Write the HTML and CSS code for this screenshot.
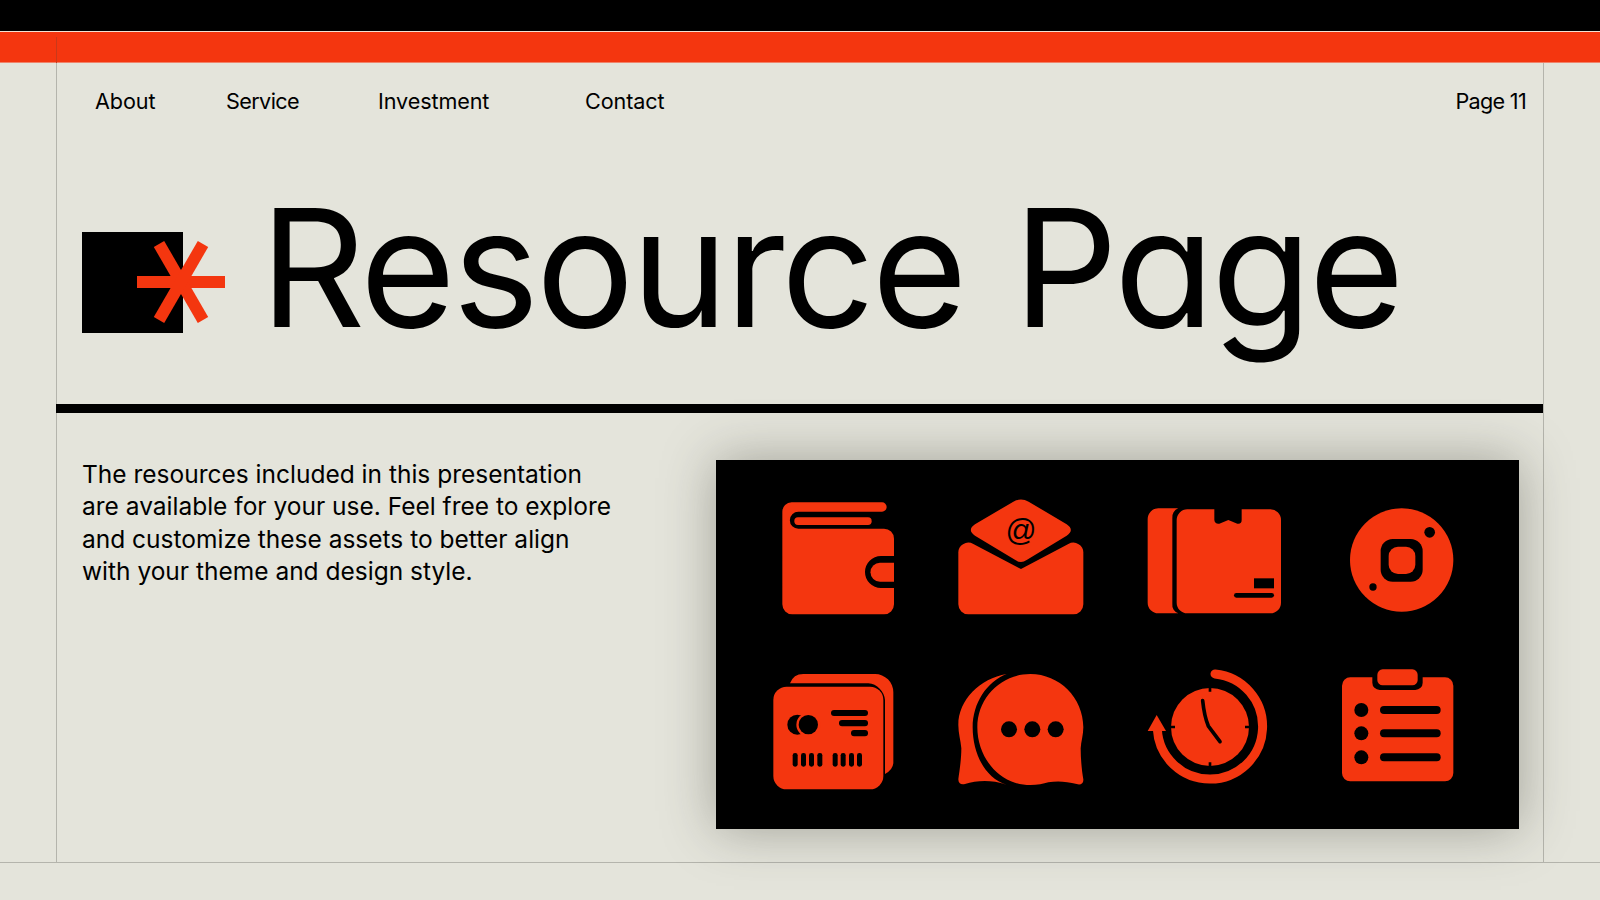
FILE: index.html
```html
<!DOCTYPE html>
<html lang="en">

<head>
    <meta charset="UTF-8">
    <meta name="viewport" content="width=device-width, initial-scale=1.0">
    <title>Resource Page</title>
    <link rel="stylesheet" href="styles.css">
</head>

<body>
    <div class="top-black"></div>
    <div class="top-orange"></div>

    <main class="frame">
        <nav class="nav">
            <a>About</a>
            <a class="nav-tight">Service</a>
            <a>Investment</a>
            <a>Contact</a>
            <span class="page-no">Page 11</span>
        </nav>

        <header class="hero">
            <svg class="mark" width="143" height="101" viewBox="0 0 143 101">
                <rect width="101" height="101" fill="#000" />
                <g stroke="#f4360f" stroke-width="12">
                    <path d="M55 50H143" />
                    <path d="M77 12L121 88" />
                    <path d="M121 12L77 88" />
                </g>
            </svg>
            <h1>Resource Page</h1>
        </header>

        <section class="content">
            <p class="intro">The resources included in this presentation<br>are available for your use. Feel free to explore<br>and customize these assets to better align<br>with your theme and design style.</p>

            <div class="panel">
                <!-- wallet -->
                <svg class="icon" viewBox="0 0 570 510">
                    <path class="fg" d="M155 97H426a14 14 0 0 1 0 28H175a25.500 25.500 0 0 0 0 51H432a30 30 0 0 1 30 30V258H423a48 48 0 0 0 0 96H462V403a30 30 0 0 1-30 30H157a30 30 0 0 1-30-30V125a28 28 0 0 1 28-28Z" />
                    <rect class="fg" x="163" y="142" width="232" height="23" rx="11" />
                    <path class="fg" d="M462 278H420a28.500 28.500 0 0 0 0 57H462Z" />
                </svg>
                <!-- open mail -->
                <svg class="icon" viewBox="190 0 570 510">
                    <path class="fg" d="M275 250a30 30 0 0 1 45-28L463 297L605 222a30 30 0 0 1 45 28V403a30 30 0 0 1-30 30H305a30 30 0 0 1-30-30Z" />
                    <path class="fg" d="M440 95Q463 82 486 95L600 163Q625 180 600 197L480 270Q463 282 446 270L325 197Q300 180 325 163Z" />
                    <text class="at" x="463" y="213" text-anchor="middle">@</text>
                </svg>
                <!-- parcel -->
                <svg class="icon" viewBox="0 0 570 510">
                    <path class="fg" d="M175 115H115a32 32 0 0 0-32 32V398a32 32 0 0 0 32 32H175a26 26 0 0 1-18-28V145a28 28 0 0 1 18-30Z" />
                    <path class="fg" d="M202 118H283V150Q285 163 298 161L325 150L352 161Q365 163 365 150V118H450a32 32 0 0 1 33 32V398a32 32 0 0 1-32 32H202a32 32 0 0 1-32-32V150a32 32 0 0 1 32-32Z" />
                    <rect class="bg" x="402" y="325" width="60" height="30" />
                    <rect class="bg" x="342" y="369" width="120" height="14" rx="7" />
                </svg>
                <!-- round app -->
                <svg class="icon" viewBox="190 0 570 510">
                    <circle class="fg" cx="465" cy="270" r="155" />
                    <rect class="bg" x="402" y="207" width="126" height="128" rx="36" />
                    <rect class="fg" x="426" y="230" width="80" height="82" rx="28" />
                    <circle class="bg" cx="549" cy="187" r="16" />
                    <circle class="bg" cx="379" cy="351" r="11" />
                </svg>
                <!-- cards -->
                <svg class="icon" viewBox="0 0 570 510">
                    <path class="fg" d="M150 100Q160 72 190 72H405a55 55 0 0 1 55 55V340Q458 360 435 372V150a55 55 0 0 0-50-50Z" />
                    <rect class="fg" x="100" y="110" width="330" height="308" rx="40" />
                    <circle class="bg" cx="172" cy="224" r="30" />
                    <circle class="fg" cx="205" cy="224" r="36" />
                    <circle class="bg" cx="205" cy="224" r="29" />
                    <rect class="bg" x="273" y="180" width="111" height="18" rx="9" />
                    <rect class="bg" x="297" y="210" width="87" height="19" rx="9" />
                    <rect class="bg" x="333" y="240" width="51" height="19" rx="9" />
                    <rect class="bg" x="158" y="309" width="15" height="41" rx="7" />
                    <rect class="bg" x="183" y="309" width="15" height="41" rx="7" />
                    <rect class="bg" x="207" y="309" width="15" height="41" rx="7" />
                    <rect class="bg" x="232" y="309" width="15" height="41" rx="7" />
                    <rect class="bg" x="278" y="309" width="15" height="41" rx="7" />
                    <rect class="bg" x="302" y="309" width="15" height="41" rx="7" />
                    <rect class="bg" x="327" y="309" width="15" height="41" rx="7" />
                    <rect class="bg" x="351" y="309" width="15" height="41" rx="7" />
                </svg>
                <!-- chat -->
                <svg class="icon" viewBox="190 0 570 510">
                    <path class="fg" d="M420 72C340 85 275 150 275 225C275 250 282 270 284 295C284 330 278 365 275 388C275 400 283 405 295 402C330 392 370 388 420 404C355 385 318 310 318 232C318 160 360 95 420 72Z" />
                    <path class="fg" d="M491 72C578 72 650 143 650 232C650 255 643 275 642 295C642 330 646 365 650 388C651 400 642 406 630 402C600 394 570 392 545 397C520 405 480 410 445 398C380 378 332 310 332 232C332 143 403 72 491 72Z" />
                    <circle class="bg" cx="427" cy="238" r="24" />
                    <circle class="bg" cx="497" cy="238" r="24" />
                    <circle class="bg" cx="567" cy="238" r="24" />
                </svg>
                <!-- clock -->
                <svg class="icon" viewBox="0 0 570 510">
                    <circle class="fg" cx="270" cy="231" r="117" />
                    <path class="hand" d="M248 152Q253 200 265 228L300 275" />
                    <path class="tick" d="M270 113V125M270 337V349M153 231H165M375 231H387" />
                    <path class="arc" d="M285 72A158 158 0 1 1 112 238" />
                    <path class="fg" d="M110 195L138 243H83Z" />
                </svg>
                <!-- clipboard -->
                <svg class="icon" viewBox="190 0 570 510">
                    <rect class="fg" x="286" y="82" width="334" height="312" rx="25" />
                    <rect class="bg" x="377" y="50" width="151" height="70" rx="22" />
                    <rect class="fg" x="392" y="58" width="121" height="48" rx="16" />
                    <circle class="bg" cx="344" cy="180" r="21" />
                    <circle class="bg" cx="344" cy="250" r="21" />
                    <circle class="bg" cx="344" cy="322" r="21" />
                    <rect class="bg" x="400" y="168" width="182" height="24" rx="12" />
                    <rect class="bg" x="400" y="238" width="182" height="24" rx="12" />
                    <rect class="bg" x="400" y="310" width="182" height="24" rx="12" />
                </svg>
            </div>
        </section>
    </main>

    <footer class="bottom"></footer>
</body>

</html>
```

FILE: styles.css
```css
* {
    margin: 0;
    padding: 0;
    box-sizing: border-box;
}

body {
    width: 1600px;
    height: 900px;
    overflow: hidden;
    background: #e4e4db;
    color: #000;
    font-family: 'Inter', 'Liberation Sans', sans-serif;
}

.top-black {
    height: 32px;
    background: #000;
    border-bottom: 1px solid #f3e2d2;
}

.top-orange {
    height: 31px;
    background: #f4360f;
    border-bottom: 1px solid #f0836a;
}

.frame {
    position: relative;
    height: 799px;
    margin: 0 56px 0 56px;
    border-left: 1px solid #b4b4ac;
    border-right: 1px solid #b4b4ac;
}

/* the left guide runs up into the orange band */
.frame::before {
    content: "";
    position: absolute;
    left: -1px;
    top: -26px;
    width: 1px;
    height: 26px;
    background: #c9391a;
}

.nav {
    display: grid;
    grid-template-columns: 131px 152px 207px auto 1fr;
    align-items: center;
    height: 76px;
    padding: 0 17px 0 38px;
    font-size: 21.6px;
    letter-spacing: -0.1px;
}

.nav-tight {
    letter-spacing: -0.6px;
}

.page-no {
    justify-self: end;
    letter-spacing: -0.7px;
}

.hero {
    display: flex;
    align-items: flex-start;
    height: 265px;
    padding: 93px 0 0 25px;
    gap: 35px;
}

h1 {
    margin-top: -62px;
    font-size: 164px;
    font-weight: 400;
    line-height: 1.2;
    letter-spacing: -3.1px;
    word-spacing: 6px;
    white-space: nowrap;
    font-feature-settings: "cv11" 1;
}

.content {
    display: flex;
    justify-content: space-between;
    align-items: flex-start;
    margin: 0 0 0 -1px;
    border-top: 9px solid #000;
    padding: 47px 24px 0 26px;
}

.intro {
    margin-top: -2px;
    font-size: 24.5px;
    line-height: 32.4px;
}

.panel {
    display: grid;
    grid-template-columns: repeat(4, 190px);
    grid-template-rows: repeat(2, 170px);
    row-gap: 10px;
    width: 803px;
    height: 369px;
    padding: 10px 19px 9px 24px;
    background: #000;
    box-shadow: 0 0 50px rgba(60, 60, 50, 0.4);
}

.icon {
    display: block;
    width: 190px;
    height: 170px;
}

.fg {
    fill: #f4360f;
}

.bg {
    fill: #000;
}

.at {
    font-family: 'Liberation Sans', sans-serif;
    font-size: 92px;
    fill: #000;
}

.hand {
    fill: none;
    stroke: #000;
    stroke-width: 11;
    stroke-linecap: round;
}

.tick {
    fill: none;
    stroke: #000;
    stroke-width: 8;
}

.arc {
    fill: none;
    stroke: #f4360f;
    stroke-width: 27;
    stroke-linecap: round;
}

.bottom {
    height: 38px;
    border-top: 1px solid #b4b4ac;
}
```
